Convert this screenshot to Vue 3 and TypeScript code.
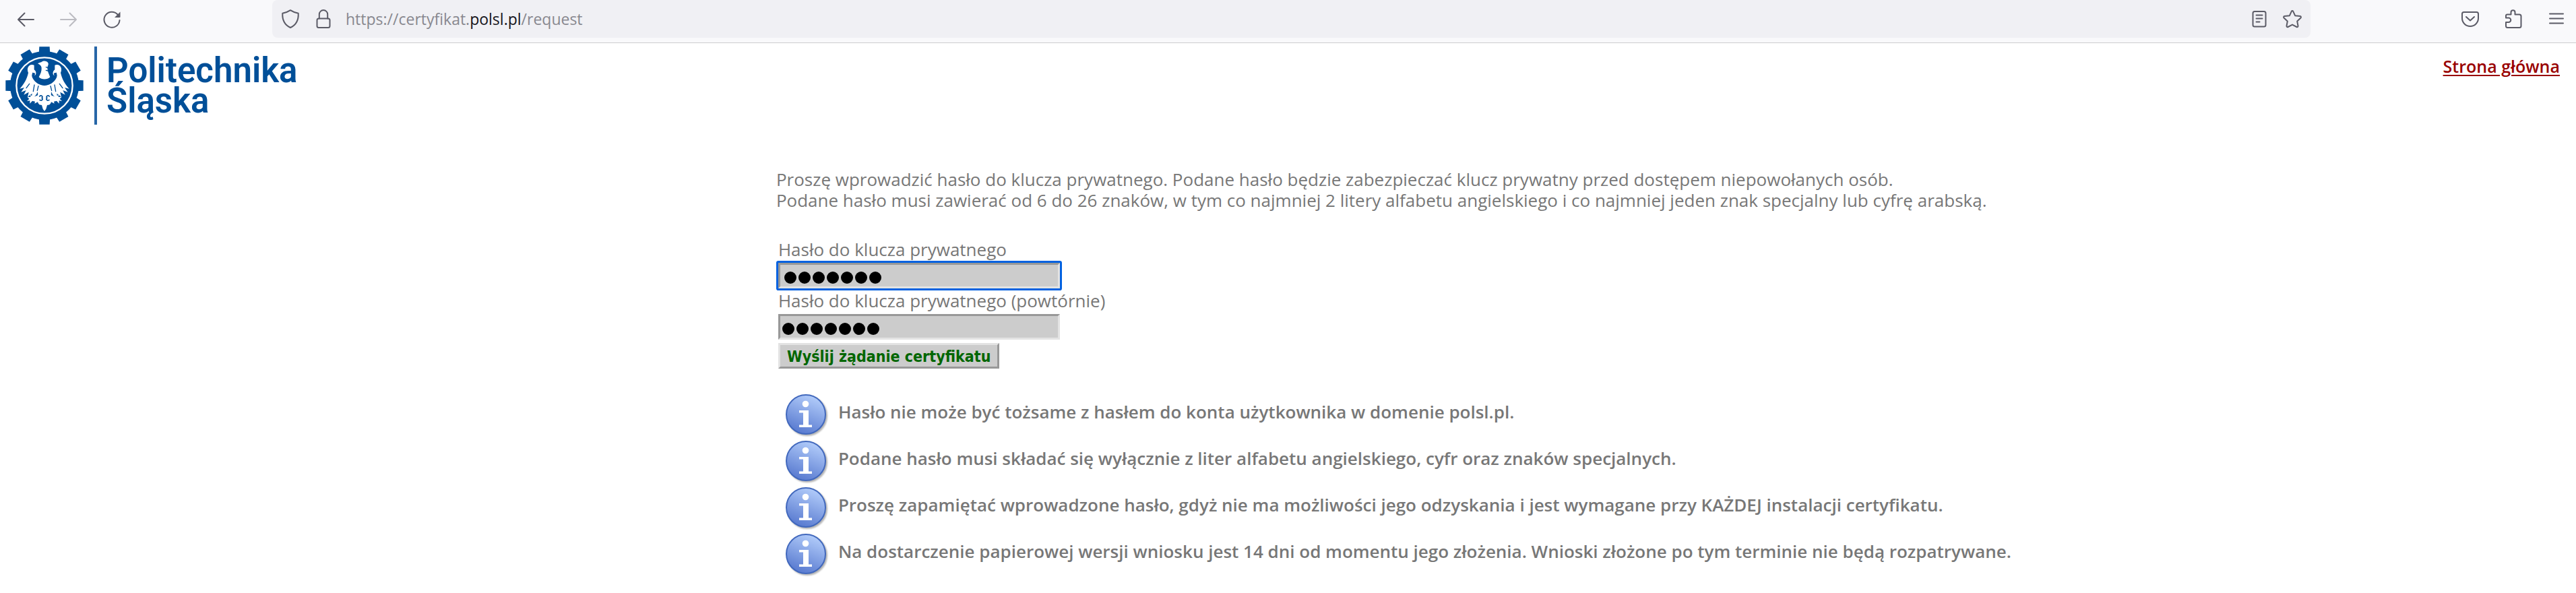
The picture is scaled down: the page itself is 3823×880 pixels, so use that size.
<script setup lang="ts">
import { ref } from 'vue'

const password = ref('haslo1!')
const repeated = ref('haslo1!')

const teeth = Array.from({ length: 12 }, (_, i) => i * 30)

const notes = [
  'Hasło nie może być tożsame z hasłem do konta użytkownika w domenie polsl.pl.',
  'Podane hasło musi składać się wyłącznie z liter alfabetu angielskiego, cyfr oraz znaków specjalnych.',
  'Proszę zapamiętać wprowadzone hasło, gdyż nie ma możliwości jego odzyskania i jest wymagane przy KAŻDEJ instalacji certyfikatu.',
  'Na dostarczenie papierowej wersji wniosku jest 14 dni od momentu jego złożenia. Wnioski złożone po tym terminie nie będą rozpatrywane.',
]
</script>

<template>
  <div class="page">
    <div class="toolbar">
      <div class="nav">
        <button type="button" class="tool" aria-label="Wstecz">
          <svg viewBox="0 0 32 32"><path d="M28 17H5M14.500 7.500L5 17l9.500 9.500" /></svg>
        </button>
        <button type="button" class="tool" aria-label="Do przodu" disabled>
          <svg viewBox="0 0 32 32"><path d="M4 17h23M17.500 7.500L27 17l-9.500 9.500" /></svg>
        </button>
        <button type="button" class="tool" aria-label="Odśwież">
          <svg viewBox="0 0 32 32">
            <path d="M24.300 9.200A11.500 11.500 0 1 0 27.500 18" />
            <path class="solid" d="M28.500 5.500v7.500a1 1 0 0 1-1 1H20z" />
          </svg>
        </button>
      </div>

      <div class="address">
        <button type="button" class="tool" aria-label="Ochrona przed śledzeniem">
          <svg viewBox="0 0 32 32"><path d="M16 3.200c3.500 2.300 7.500 3.900 11.700 4.600.5 8.500-1.500 16.500-11.700 21.200C5.800 24.300 3.800 16.300 4.300 7.800 8.500 7.100 12.500 5.500 16 3.200z" /></svg>
        </button>
        <button type="button" class="tool" aria-label="Informacje o witrynie">
          <svg viewBox="0 0 32 32">
            <rect x="6.500" y="15.500" width="19" height="13.500" rx="2.500" />
            <path d="M9.800 15.500V9.300a6.200 6.200 0 0 1 12.400 0v6.200" />
          </svg>
        </button>
        <div class="url">https://certyfikat.<b>polsl.pl</b>/request</div>
        <button type="button" class="tool" aria-label="Widok czytelnika">
          <svg viewBox="0 0 32 32">
            <rect x="6.500" y="5" width="19" height="22.500" rx="2.500" />
            <path d="M11.500 10.500h9M11.500 15.500h9M11.500 20.500h5" />
          </svg>
        </button>
        <button type="button" class="tool" aria-label="Dodaj zakładkę">
          <svg viewBox="0 0 32 32"><path d="M14.800 4.800c.5-1.100 1.900-1.100 2.400 0l2.900 6.400 7.600.9c1.200.2 1.600 1.600.8 2.400l-5.300 5 1.300 7c.2 1.200-1 2-2 1.500L16 24.600 9.500 28c-1 .5-2.200-.3-2-1.500l1.300-7-5.300-5c-.8-.8-.4-2.200.8-2.400l7.600-.9z" /></svg>
        </button>
      </div>

      <div class="extras">
        <button type="button" class="tool" aria-label="Zapisz w Pocket">
          <svg viewBox="0 0 32 32">
            <path d="M6.500 6h19a2.500 2.500 0 0 1 2.500 2.500V15a12 12 0 0 1-24 0V8.500A2.500 2.500 0 0 1 6.500 6z" />
            <path d="M10 13l6 5.500 6-5.500" />
          </svg>
        </button>
        <button type="button" class="tool" aria-label="Rozszerzenia">
          <svg viewBox="0 0 32 32"><path d="M7 9.500h5.500V6.200a3 3 0 0 1 6 0v3.300H25a2.500 2.500 0 0 1 2.500 2.500v14.500a2.500 2.500 0 0 1-2.500 2.500H7.500A2.500 2.500 0 0 1 5 26.500V21h4a3 3 0 0 0 0-6.500H5v-3a2 2 0 0 1 2-2z" /></svg>
        </button>
        <button type="button" class="tool" aria-label="Menu">
          <svg viewBox="0 0 32 32"><path d="M6 8.500h20M6 15.500h20M6 22.500h20" /></svg>
        </button>
      </div>
    </div>

    <header class="header">
      <a class="brand" href="#">
        <svg class="crest" viewBox="24 14 348 348" aria-hidden="true">
          <g fill="#004f98">
            <circle cx="198" cy="188" r="153" />
            <path v-for="angle in teeth" :key="angle" :transform="`rotate(${angle} 198 188)`" d="M175 15h46l2 35h-50z" />
          </g>
          <circle cx="198" cy="188" r="125" fill="none" stroke="#fff" stroke-width="7" />
          <g fill="#fff">
            <path
              v-for="side in ['translate(0 0)', 'matrix(-1 0 0 1 396 0)']"
              :key="side"
              :transform="side"
              d="M152 97c-22-8-36 12-26 34-6 28-20 52-38 71l20-5-14 20 22-8-10 20 22-12-5 22 20-16-3 22c14-6 23-16 28-30l1 24c10-7 15-15 18-27l11 14v-38c-22-2-43-14-53-34-6-12-2-22 5-23 7 0 8 8 3 12 9 0 11-17-1-26z"
            />
            <path d="M168 90c6-4 11-5 16-6 6-7 24-8 30 3 4 8-3 15-3 23 0 15 7 26 12 40-12 13-38 13-50 0 7-14 13-26 12-41-1-8-5-13-17-19z" />
            <path d="M184 200h28c2 18 8 28 22 34l14 4 13-9-1 10 15-1-9 9 10 10-13-2 0 13-11-12-12 3 2 9-14-7c-3 11-9 14-18 14l-5 17-7 10-7-10-5-17c-9 0-15-3-18-14l-14 7 2-9-12-3-11 12 0-13-13 2 10-10-9-9 15 1-1-10 13 9 14-4c14-6 20-16 22-34z" />
          </g>
          <g fill="none" stroke="#004f98" stroke-linecap="round">
            <path stroke-width="5" d="M146 133c14 47 90 47 104 0" />
            <path stroke-width="4" d="M150 155c18 38 78 38 96 0" />
            <path stroke-width="4" d="M153 185l-5 29M171 190l-5 20M243 185l5 29M225 190l5 20M131 180l-14 19M265 180l14 19M205 106l8 2M205 120l8 2" />
            <path stroke-width="5" d="M176 236c8-8 16 0 11 7 6 7-2 14-10 9M220 236c-8-8-16 0-11 7-6 7 2 14 10 9" />
          </g>
        </svg>
        <span class="rule"></span>
        <span class="name">Politechnika<br />Śląska</span>
      </a>
      <a class="home" href="#">Strona główna</a>
    </header>

    <main class="content">
      <p class="intro">
        Proszę wprowadzić hasło do klucza prywatnego. Podane hasło będzie zabezpieczać klucz prywatny przed dostępem niepowołanych osób.<br />
        Podane hasło musi zawierać od 6 do 26 znaków, w tym co najmniej 2 litery alfabetu angielskiego i co najmniej jeden znak specjalny lub cyfrę arabską.
      </p>

      <form class="form" @submit.prevent>
        <label for="password">Hasło do klucza prywatnego</label>
        <div class="field active">
          <input id="password" v-model="password" type="password" />
          <span class="mask" aria-hidden="true"><i v-for="n in password.length" :key="n"></i></span>
        </div>
        <label for="repeated">Hasło do klucza prywatnego (powtórnie)</label>
        <div class="field">
          <input id="repeated" v-model="repeated" type="password" />
          <span class="mask" aria-hidden="true"><i v-for="n in repeated.length" :key="n"></i></span>
        </div>
        <button type="submit" class="submit">Wyślij żądanie certyfikatu</button>
      </form>

      <svg class="defs" aria-hidden="true">
        <defs>
          <linearGradient id="info-fill" x1="0.7" y1="0" x2="0.3" y2="1">
            <stop offset="0" stop-color="#b4cefb" />
            <stop offset="1" stop-color="#5577ce" />
          </linearGradient>
        </defs>
      </svg>
      <ul class="notes">
        <li v-for="note in notes" :key="note">
          <svg class="info" viewBox="0 0 64 64" aria-hidden="true">
            <circle cx="32" cy="31" r="29" fill="url(#info-fill)" stroke="#4168bd" stroke-width="2" />
            <circle cx="31.500" cy="15.500" r="4.800" fill="#fff" />
            <path d="M22 25h14v21.500h5V50H22v-3.500h6V28.500h-6z" fill="#fff" />
          </svg>
          <span class="note">{{ note }}</span>
        </li>
      </ul>
    </main>
  </div>
</template>

<style>
body {
  margin: 0;
  background: #fff;
}
</style>

<style scoped>
.page {
  color: #777;
  font: 26px/31px "Trebuchet MS", "Open Sans", "Noto Sans", sans-serif;
}

.toolbar {
  display: flex;
  justify-content: space-between;
  height: 63px;
  background: #f9f9fb;
  border-bottom: 1px solid #cccccf;
}

.nav,
.extras {
  display: flex;
  align-items: center;
  gap: 32px;
  height: 56px;
}

.nav {
  width: 382px;
  padding-left: 22px;
}

.extras {
  width: 381px;
  justify-content: flex-end;
  padding-right: 13px;
}

.tool {
  display: block;
  width: 32px;
  height: 32px;
  padding: 0;
  border: 0;
  background: none;
  color: #5b5b66;
}

.tool:disabled {
  color: #bbbbc1;
}

.tool svg {
  display: block;
  width: 32px;
  height: 32px;
  fill: none;
  stroke: currentColor;
  stroke-width: 2;
  stroke-linecap: round;
  stroke-linejoin: round;
}

.tool .solid {
  fill: currentColor;
  stroke: none;
}

.address {
  display: flex;
  flex: 1;
  align-items: center;
  gap: 17px;
  height: 56px;
  padding: 0 11px;
  box-sizing: border-box;
  border-radius: 8px;
  background: #f0f0f4;
}

.url {
  flex: 1;
  color: #88888f;
  font-family: "Segoe UI", "Open Sans", sans-serif;
  font-size: 23px;
}

.url b {
  color: #15141a;
  font-weight: 400;
}

.header {
  display: flex;
  justify-content: space-between;
  align-items: flex-start;
  padding: 5px 24px 0 8px;
}

.brand {
  display: flex;
  color: #004f98;
  text-decoration: none;
}

.crest {
  width: 116px;
  height: 116px;
}

.rule {
  width: 4px;
  margin: 0 14px 0 16px;
  background: #2766a7;
}

.name {
  padding-top: 13px;
  font: 600 51px/45px Roboto, sans-serif;
}

.home {
  padding-top: 14px;
  color: #900;
  font-size: 25px;
  font-weight: 600;
  text-decoration-thickness: 2px;
  text-underline-offset: 3px;
}

.content {
  padding: 66px 0 20px 30%;
}

.intro {
  margin: 0;
  padding-left: 5px;
}

.form {
  display: flex;
  flex-direction: column;
  align-items: flex-start;
  padding: 42px 0 0 8px;
}

.field {
  display: grid;
  width: 418px;
  height: 38px;
  margin-top: 4px;
}

.field.active + label {
  margin-top: 3px;
}

.field input,
.mask {
  grid-area: 1 / 1;
}

.field input {
  box-sizing: border-box;
  width: 100%;
  height: 100%;
  padding: 0 3px;
  border: 3px solid;
  border-color: #989898 #e3e3e3 #e3e3e3 #989898;
  background: #ccc;
  color: transparent;
  caret-color: #000;
}

.field input:focus {
  outline: none;
}

.field.active {
  border-radius: 1px;
  box-shadow: 0 0 0 3px #0061e0;
}

.mask {
  z-index: 1;
  display: flex;
  align-items: center;
  gap: 3px;
  padding: 5px 0 0 6px;
  pointer-events: none;
}

.active .mask {
  padding-left: 9px;
}

.mask i {
  width: 18px;
  height: 18px;
  border-radius: 50%;
  background: #000;
}

.submit {
  height: 38px;
  margin-top: 5px;
  padding: 2px 10px 0;
  border: 3px solid;
  border-color: #e3e3e3 #989898 #989898 #e3e3e3;
  background: #ccc;
  color: #060;
  font: bold 23px/30px Tahoma, "DejaVu Sans Condensed", sans-serif;
}

.defs {
  display: block;
  width: 0;
  height: 0;
}

.notes {
  margin: 0;
  padding: 34px 0 0 17px;
  list-style: none;
  font-weight: 600;
}

.notes li {
  display: flex;
  align-items: center;
  gap: 16px;
  height: 69px;
}

.note {
  padding-bottom: 9px;
}

.info {
  width: 64px;
  height: 64px;
  filter: drop-shadow(2px 2px 1px rgba(0, 0, 0, 0.3));
}
</style>
